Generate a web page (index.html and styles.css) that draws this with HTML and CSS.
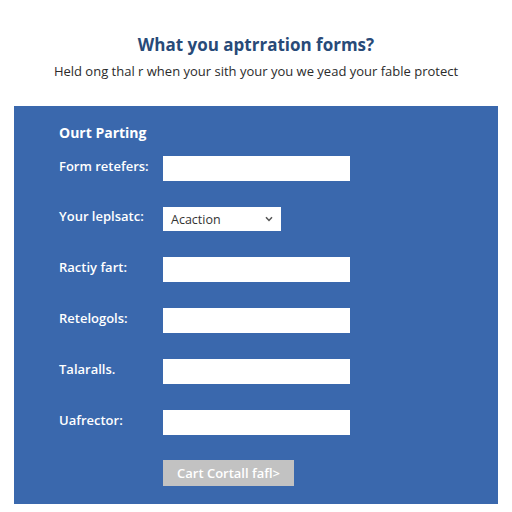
FILE: index.html
```html
<!DOCTYPE html>
<html>
<head>
<meta charset="utf-8">
<link rel="stylesheet" href="styles.css">
</head>
<body>
<header class="intro">
  <h1 class="title">What you aptrration forms?</h1>
  <p class="subtitle">Held ong thal r when your sith your you we yead your fable protect</p>
</header>
<section class="panel">
  <h2 class="panel-title">Ourt Parting</h2>
  <div class="row first">
    <label class="label">Form retefers:</label>
    <div class="input"></div>
  </div>
  <div class="row">
    <label class="label">Your leplsatc:</label>
    <div class="select"><span>Acaction</span><svg class="caret" width="8" height="6" viewBox="0 0 8 6"><path d="M1 1.2 L4 4.5 L7 1.2" fill="none" stroke="#555" stroke-width="1.5"/></svg></div>
  </div>
  <div class="row">
    <label class="label">Ractiy fart:</label>
    <div class="input"></div>
  </div>
  <div class="row">
    <label class="label">Retelogols:</label>
    <div class="input"></div>
  </div>
  <div class="row">
    <label class="label">Talaralls.</label>
    <div class="input"></div>
  </div>
  <div class="row">
    <label class="label">Uafrector:</label>
    <div class="input"></div>
  </div>
  <div class="row actions">
    <span class="label"></span>
    <div class="button">Cart Cortall fafl&gt;</div>
  </div>
</section>
</body>
</html>
```
FILE: styles.css
```css
html, body {
  margin: 0;
  padding: 0;
  background: #ffffff;
}
body {
  width: 512px;
  height: 512px;
  overflow: hidden;
  font-family: "Open Sans", "Liberation Sans", sans-serif;
}
.intro {
  text-align: center;
  padding-top: 34px;
  height: 72px;
}
.title {
  margin: 0;
  font-size: 17px;
  font-weight: 700;
  color: #284a78;
  line-height: 22px;
}
.subtitle {
  margin: 6px 0 0;
  font-size: 13px;
  color: #2b2b2b;
  line-height: 18px;
}
.panel {
  margin-left: 14px;
  width: 484px;
  height: 398px;
  background: #3a68ad;
  padding: 17px 0 0 45px;
  box-sizing: border-box;
  color: #fff;
}
.panel-title {
  margin: 0;
  font-size: 14px;
  font-weight: 700;
  line-height: 20px;
}
.row {
  display: flex;
  align-items: center;
  margin-top: 26px;
}
.row.first {
  margin-top: 13px;
}
.label {
  width: 104px;
  font-size: 13px;
  font-weight: 600;
  line-height: 18px;
  margin-top: -6px;
}
.input {
  width: 187px;
  height: 25px;
  background: #fff;
}
.select {
  width: 118px;
  height: 24px;
  background: #fff;
  color: #333;
  font-size: 12.5px;
  display: flex;
  align-items: center;
  justify-content: space-between;
  padding: 0 8px 0 8px;
  box-sizing: border-box;
}
.caret {
  display: block;
}
.actions {
  margin-top: 25px;
}
.button {
  width: 131px;
  height: 26px;
  background: #c2c2c2;
  color: #fff;
  font-size: 13px;
  font-weight: 600;
  display: flex;
  align-items: center;
  justify-content: center;
}
```
